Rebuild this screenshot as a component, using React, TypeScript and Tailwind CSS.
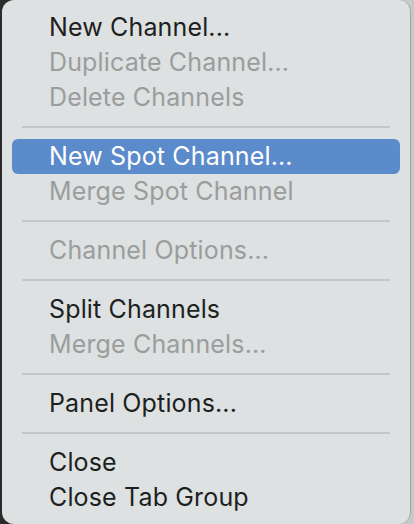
import React from "react";

type Item =
  | { kind: "item"; label: string; disabled?: boolean; active?: boolean }
  | { kind: "sep" };

const items: Item[] = [
  { kind: "item", label: "New Channel..." },
  { kind: "item", label: "Duplicate Channel...", disabled: true },
  { kind: "item", label: "Delete Channels", disabled: true },
  { kind: "sep" },
  { kind: "item", label: "New Spot Channel...", active: true },
  { kind: "item", label: "Merge Spot Channel", disabled: true },
  { kind: "sep" },
  { kind: "item", label: "Channel Options...", disabled: true },
  { kind: "sep" },
  { kind: "item", label: "Split Channels" },
  { kind: "item", label: "Merge Channels...", disabled: true },
  { kind: "sep" },
  { kind: "item", label: "Panel Options..." },
  { kind: "sep" },
  { kind: "item", label: "Close" },
  { kind: "item", label: "Close Tab Group" },
];

export default function App() {
  return (
    <div className="w-[414px] h-[524px] flex bg-[linear-gradient(to_right,#2b2b2b_50%,#c6c9c9_50%)] font-['Inter','Liberation_Sans',sans-serif]">
      <div className="w-[2px]" />
      <div className="w-[409px] h-full rounded-[12px] bg-[#dde1e2] border-r border-[#a3a6a6] pt-[10px]">
        {items.map((item, i) =>
          item.kind === "sep" ? (
            <div key={i} className="h-[24px] flex items-center px-[20px]">
              <div className="h-[2px] w-full bg-[#c4c7c8]" />
            </div>
          ) : (
            <div
              key={i}
              className={
                "h-[35px] mx-[10px] px-[37px] flex items-center rounded-[6px] text-[25px] tracking-[0.15px] " +
                (item.active
                  ? "bg-[#5b8bcb] text-white"
                  : item.disabled
                  ? "text-[#9b9d9d]"
                  : "text-[#1e1f1f]")
              }
            >
              {item.label}
            </div>
          )
        )}
      </div>
    </div>
  );
}
